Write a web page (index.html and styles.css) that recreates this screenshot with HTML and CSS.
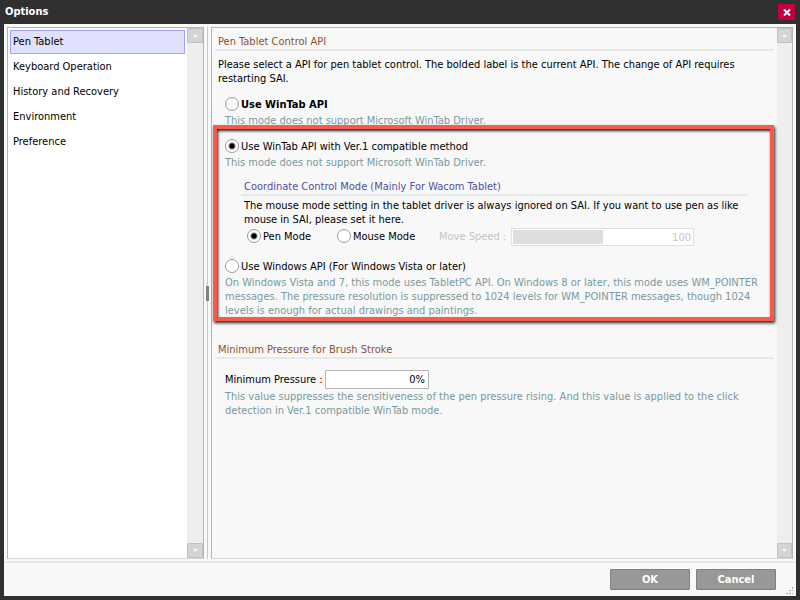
FILE: index.html
```html
<!DOCTYPE html>
<html lang="en">
<head>
<meta charset="utf-8">
<title>Options</title>
<link rel="stylesheet" href="styles.css">
</head>
<body>
<div class="window">
  <header class="titlebar">
    <h1>Options</h1>
    <button class="close" aria-label="Close"><svg width="8" height="7" viewBox="0 0 8 7"><path d="M1 0.500L7 6.500M7 0.500L1 6.500" stroke="#fff" stroke-width="2" fill="none"/></svg></button>
  </header>
  <main class="body">
    <nav class="list">
      <div class="items">
        <a class="item selected" href="#tablet">Pen Tablet</a>
        <a class="item" href="#keyboard">Keyboard Operation</a>
        <a class="item" href="#history">History and Recovery</a>
        <a class="item" href="#environment">Environment</a>
        <a class="item" href="#preference">Preference</a>
      </div>
      <div class="scroll">
        <button aria-label="Scroll list up"><svg width="5" height="3" viewBox="0 0 5 3"><path d="M0 3L2.500 0L5 3Z" fill="#f8f8f8"/></svg></button>
        <button aria-label="Scroll list down"><svg width="5" height="3" viewBox="0 0 5 3"><path d="M0 0L2.500 3L5 0Z" fill="#f8f8f8"/></svg></button>
      </div>
    </nav>
    <div class="splitter"><span class="grip"></span></div>
    <section class="panel" id="tablet">
      <div class="content">
        <h2>Pen Tablet Control API</h2>
        <p class="intro">Please select a API for pen tablet control. The bolded label is the current API. The change of API requires<br>restarting SAI.</p>
        <div class="option">
          <label class="radio current"><input type="radio" name="api">Use WinTab API</label>
          <p class="hint">This mode does not support Microsoft WinTab Driver.</p>
        </div>
        <div class="marked">
          <div class="option">
            <label class="radio"><input type="radio" name="api" checked>Use WinTab API with Ver.1 compatible method</label>
            <p class="hint">This mode does not support Microsoft WinTab Driver.</p>
          </div>
          <div class="sub">
            <h3>Coordinate Control Mode (Mainly For Wacom Tablet)</h3>
            <p>The mouse mode setting in the tablet driver is always ignored on SAI. If you want to use pen as like<br>mouse in SAI, please set it here.</p>
            <div class="modes">
              <label class="radio pen"><input type="radio" name="mode" checked>Pen Mode</label>
              <label class="radio mouse"><input type="radio" name="mode">Mouse Mode</label>
              <label class="speed-label" for="speed">Move Speed :</label>
              <input class="speed" id="speed" type="text" value="100" disabled>
            </div>
          </div>
          <div class="option">
            <label class="radio"><input type="radio" name="api">Use Windows API (For Windows Vista or later)</label>
            <p class="hint">On Windows Vista and 7, this mode uses TabletPC API. On Windows 8 or later, this mode uses WM_POINTER<br>messages. The pressure resolution is suppressed to 1024 levels for WM_POINTER messages, though 1024<br>levels is enough for actual drawings and paintings.</p>
          </div>
        </div>
        <h2>Minimum Pressure for Brush Stroke</h2>
        <div class="option pressure">
          <div class="field"><label for="min">Minimum Pressure :</label><input id="min" type="text" value="0%"></div>
          <p class="hint">This value suppresses the sensitiveness of the pen pressure rising. And this value is applied to the click<br>detection in Ver.1 compatible WinTab mode.</p>
        </div>
      </div>
      <div class="scroll">
        <button aria-label="Scroll panel up"><svg width="5" height="3" viewBox="0 0 5 3"><path d="M0 3L2.500 0L5 3Z" fill="#f8f8f8"/></svg></button>
        <button aria-label="Scroll panel down"><svg width="5" height="3" viewBox="0 0 5 3"><path d="M0 0L2.500 3L5 0Z" fill="#f8f8f8"/></svg></button>
      </div>
    </section>
  </main>
  <footer class="footer">
    <button class="action">OK</button>
    <button class="action">Cancel</button>
    <svg class="resize" width="8" height="8" viewBox="0 0 8 8" fill="#aaa"><path d="M6 0h1v2h-1zM3 3h2v1h-2zM6 3h1v1h-1zM0 6h2v1h-2zM3 6h2v1h-2zM6 6h1v1h-1z"/></svg>
  </footer>
</div>
</body>
</html>
```
FILE: styles.css
```css
* { box-sizing: border-box; }
body {
  margin: 0;
  font: 11px/14px "DejaVu Sans Condensed", "Noto Sans", sans-serif;
  color: #000;
}
h1, h2, h3, p { margin: 0; font-size: inherit; font-weight: normal; }
button, input { font: inherit; margin: 0; padding: 0; }

.window {
  min-height: 100vh;
  display: flex;
  flex-direction: column;
  background: #f8f8f8;
  border: solid #303030;
  border-width: 0 4px 4px;
}
.titlebar {
  display: flex;
  align-items: center;
  justify-content: space-between;
  height: 24px;
  padding: 0 1px;
  background: #303030;
}
.titlebar h1 { color: #fff; font-weight: bold; }
.close {
  display: flex;
  align-items: center;
  justify-content: center;
  width: 17px;
  height: 16px;
  background: #c00040;
  border: 0;
}

.body { flex: 1; display: flex; padding: 3px 3px 2px; }
.list, .panel {
  display: flex;
  border: 1px solid #b4b4b4;
  border-bottom-color: #d8d8d8;
}
.list { width: 197px; background: #fff; }
.items { flex: 1; padding: 2px; }
.item {
  display: block;
  margin-bottom: 1px;
  padding: 4px 2px;
  border: 1px solid transparent;
  line-height: 14px;
  color: #000;
  text-decoration: none;
}
.item.selected { background: #e0e0ff; border-color: #a0a0ff; }
.scroll {
  width: 16px;
  display: flex;
  flex-direction: column;
  justify-content: space-between;
  background: #eee;
}
.panel .scroll { width: 15px; }
.scroll button {
  display: flex;
  align-items: center;
  justify-content: center;
  height: 15px;
  background: #d4d4d4;
  border: 1px solid #c0c0c0;
  border-radius: 1px;
}
.splitter {
  width: 7px;
  display: flex;
  align-items: center;
  background: linear-gradient(#c8c8c8, #c8c8c8) 3px 0 / 1px 100% no-repeat;
}
.grip { width: 3px; height: 15px; margin-left: 2px; background: #808080; }

.panel { flex: 1; }
.content { flex: 1; padding: 7px 3px 0; }
h2 {
  padding: 0 3px;
  color: #905030;
  border-bottom: 2px solid #e8e8e8;
}
.intro { padding: 7px 3px 0; }
.option { padding-left: 10px; }
.intro + .option { margin-top: 11px; }
.radio { display: flex; align-items: flex-start; gap: 2px; height: 16px; line-height: 16px; }
.radio.current { font-weight: bold; }
.radio input {
  appearance: none;
  width: 14px;
  height: 14px;
  border: 1px solid #999;
  border-radius: 50%;
  background: #fff;
}
.radio input:checked { background: radial-gradient(circle, #000 0 2px, #fff 4px); }
.hint { margin-top: 1px; color: #789a9f; }

.marked { position: relative; margin-top: 11px; }
.marked::after {
  content: "";
  position: absolute;
  inset: -14px 0 -3px -2px;
  border: 4px solid #fa5a4b;
  box-shadow: 1px 2px 3px #222, inset 1px 2px 3px #222;
  pointer-events: none;
}
.sub { padding: 10px 26px 0; }
h3 {
  padding: 0 3px;
  color: #5050a0;
  border-bottom: 2px solid #e8e8e8;
}
.sub p { padding: 3px 3px 0; }
.modes { display: flex; align-items: center; height: 20px; padding-left: 6px; }
.pen { width: 90px; }
.mouse { width: 102px; }
.speed-label { width: 72px; color: #c4c4c4; }
.speed {
  width: 183px;
  height: 18px;
  padding: 0 2px;
  border: 1px solid #e0e0e0;
  background: linear-gradient(#dedede, #dedede) 1px 1px / 90px 14px no-repeat #fff;
  color: #c4c4c4;
  text-align: right;
}
.sub + .option { margin-top: 12px; }
.marked + h2 { margin-top: 25px; }
.pressure { padding-top: 11px; }
.field { display: flex; align-items: center; }
.field label { width: 100px; }
.field input {
  width: 104px;
  height: 19px;
  padding: 0 3px;
  border: 1px solid #b4b4b4;
  border-radius: 1px;
  background: #fff;
  text-align: right;
}

.footer {
  position: relative;
  display: flex;
  justify-content: flex-end;
  gap: 6px;
  padding: 6px 20px 6px;
  border-top: 2px solid #e8e8e8;
}
.action {
  width: 80px;
  height: 21px;
  color: #fff;
  font-weight: bold;
  background: #989898;
  border: 1px solid #808080;
  border-radius: 1px;
}
.resize { position: absolute; right: 2px; bottom: 1px; }
```
